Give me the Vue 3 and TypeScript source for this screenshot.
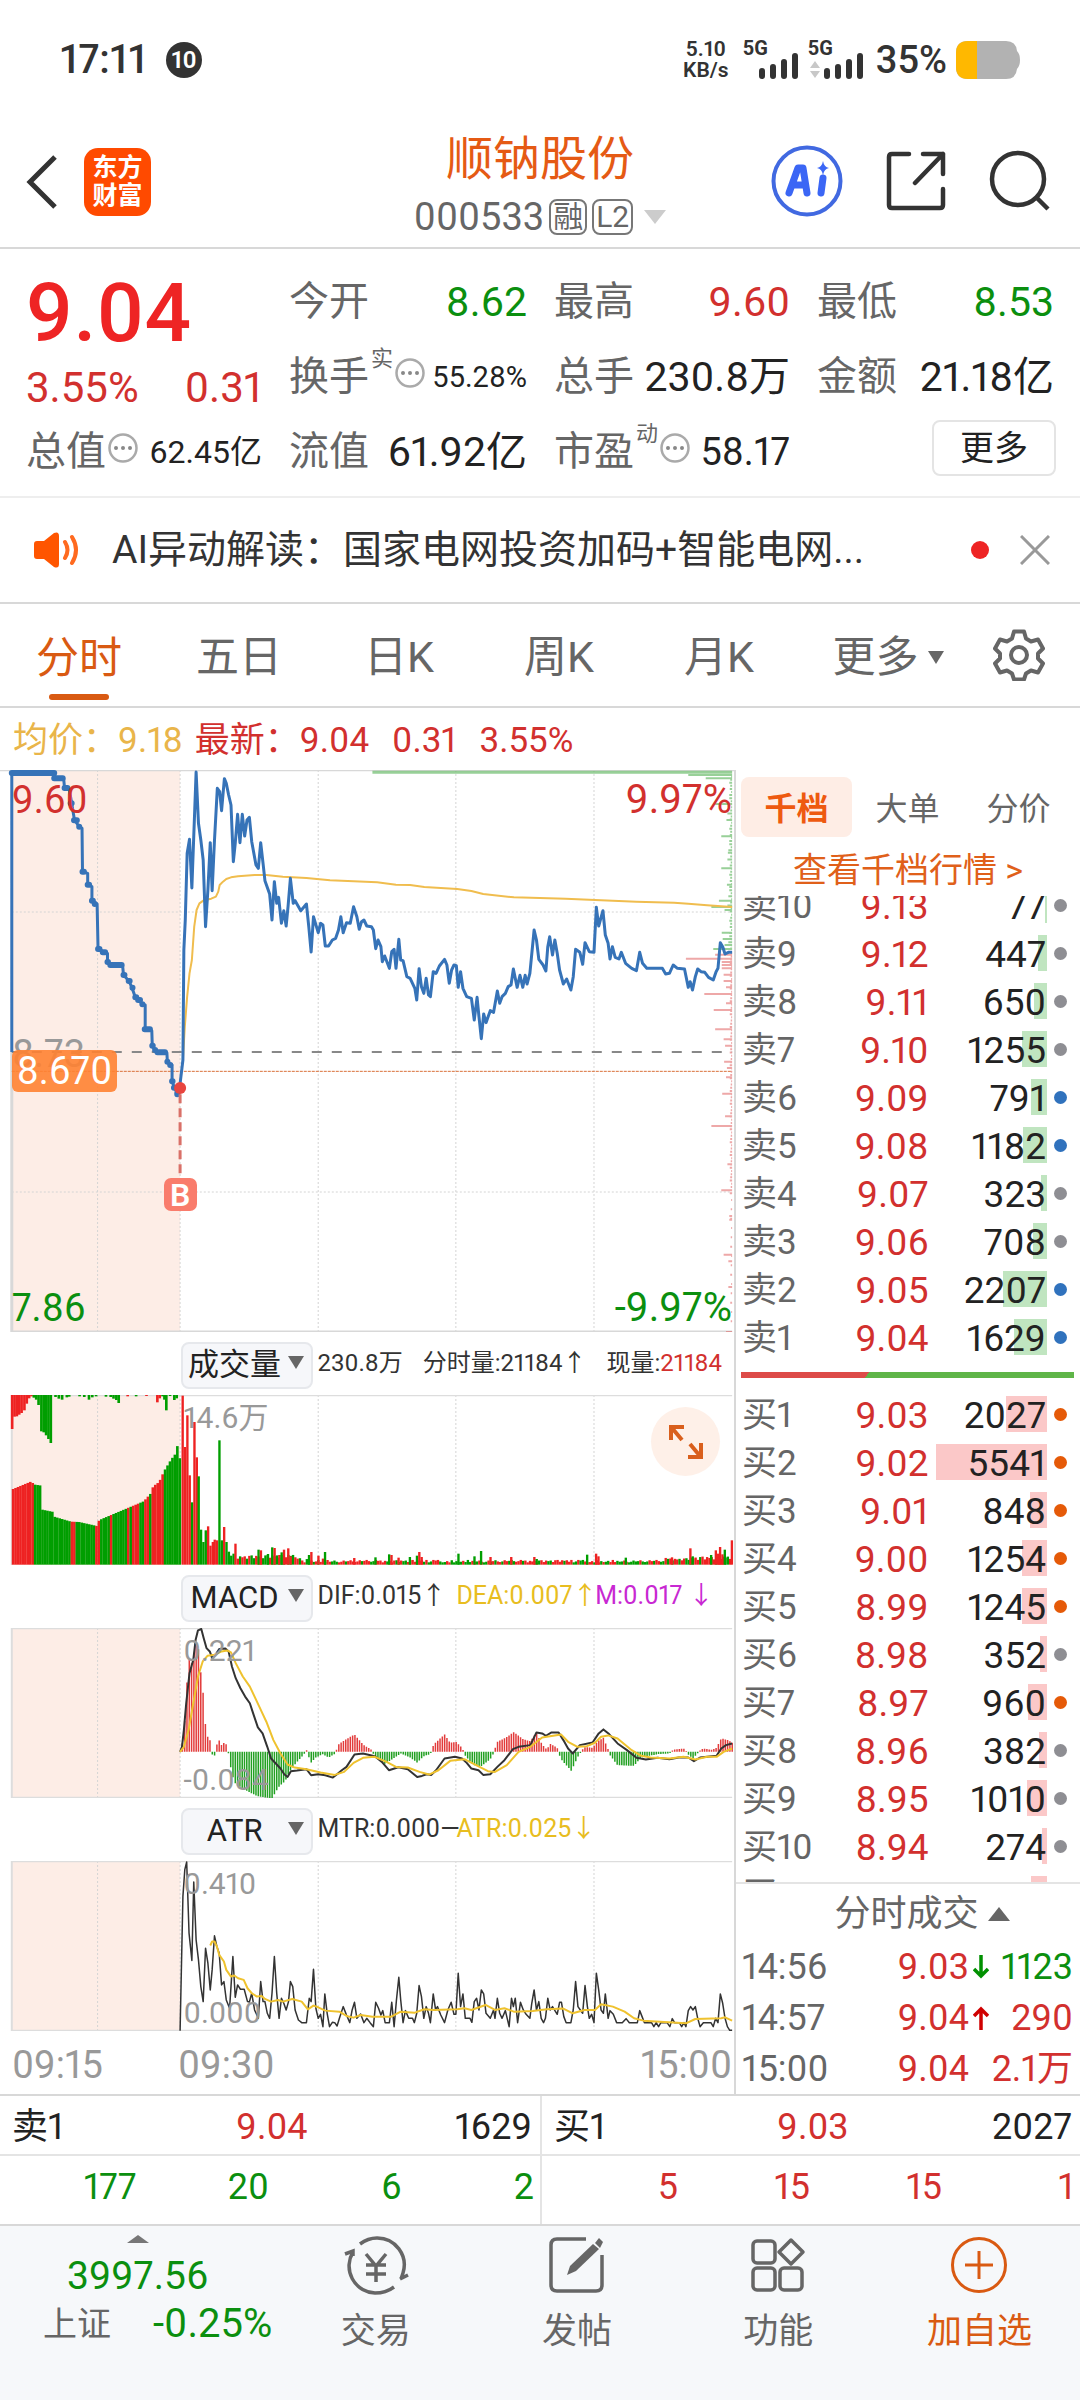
<script setup lang="ts">
interface Level { label: string; price: string; volume: number; tone: 'gray' | 'blue' | 'orange' }
interface Bar { x: number; y: number; h: number; w: number; red: boolean }

const asks: Level[] = [
  { label: '卖10', price: '9.13', volume: 77, tone: 'gray' },
  { label: '卖9', price: '9.12', volume: 447, tone: 'gray' },
  { label: '卖8', price: '9.11', volume: 650, tone: 'gray' },
  { label: '卖7', price: '9.10', volume: 1255, tone: 'gray' },
  { label: '卖6', price: '9.09', volume: 791, tone: 'blue' },
  { label: '卖5', price: '9.08', volume: 1182, tone: 'blue' },
  { label: '卖4', price: '9.07', volume: 323, tone: 'gray' },
  { label: '卖3', price: '9.06', volume: 708, tone: 'gray' },
  { label: '卖2', price: '9.05', volume: 2207, tone: 'blue' },
  { label: '卖1', price: '9.04', volume: 1629, tone: 'blue' },
]
const bids: Level[] = [
  { label: '买1', price: '9.03', volume: 2027, tone: 'orange' },
  { label: '买2', price: '9.02', volume: 5541, tone: 'orange' },
  { label: '买3', price: '9.01', volume: 848, tone: 'orange' },
  { label: '买4', price: '9.00', volume: 1254, tone: 'orange' },
  { label: '买5', price: '8.99', volume: 1245, tone: 'orange' },
  { label: '买6', price: '8.98', volume: 352, tone: 'gray' },
  { label: '买7', price: '8.97', volume: 960, tone: 'orange' },
  { label: '买8', price: '8.96', volume: 382, tone: 'gray' },
  { label: '买9', price: '8.95', volume: 1010, tone: 'gray' },
  { label: '买10', price: '8.94', volume: 274, tone: 'gray' },
  { label: '买11', price: '8.93', volume: 784, tone: 'gray' },
]
const depth = (volume: number) => ({ width: Math.max(1, Math.round(volume / 50)) + 'px' })

const trades = [
  { time: '14:56', price: '9.03', arrow: 'down', volume: '1123', cls: 'green' },
  { time: '14:57', price: '9.04', arrow: 'up', volume: '290', cls: 'red' },
  { time: '15:00', price: '9.04', arrow: '', volume: '2.1万', cls: 'red' },
]
const periods = ['分时', '五日', '日K', '周K', '月K']
const gridX = [207, 382, 675, 967, 1260]

const auction = '25,876 25,38 115,38 115,55 135,55 137,85 147,88 152,130 158,180 168,200 174,205 175,335 186,340 186,374 195,380 195,422 206,432 208,567 220,577 228,580 228,605 235,615 260,615 262,645 273,662 280,683 287,712 293,720 303,733 308,735 308,808 322,812 323,857 333,876 354,878 355,905 365,915 365,964 370,983 376,1000'
const auctionMarks = 'M25 39H115M115 55H133M137 84h6M150 130h2M157 181h6M168 200h.1M175 335h3M186 374h3M195 422h2M201 432h.1M208 567h3M218 577h5M228 606h1M234 615h24M262 645h2M273 663h2M281 683h.1M287 712h2M293 720h4M302 733h.1M307 808h11M323 857h1M329 870h.1M334 877h16M355 905h.1M361 915h.1M365 964h1M369 983h.1M376 1000v3'
const price = '376,1003 381,983 388,900 390,570 393,480 397,280 402,238 407,384 416,36 421,190 426,240 431,300 436,500 441,390 446,248 450,392 455,240 461,85 466,95 470,152 476,56 480,70 485,105 490,135 495,305 499,250 504,163 509,248 514,163 519,228 524,180 529,172 534,245 543,315 548,325 553,248 558,310 562,362 572,402 577,480 582,365 587,430 591,412 597,490 602,452 607,498 611,440 616,355 622,430 626,422 638,452 650,432 655,500 660,576 665,470 675,518 680,490 685,495 690,558 697,558 705,540 712,535 718,510 723,470 728,518 735,488 743,490 750,440 757,470 762,508 767,485 772,480 778,498 788,500 792,510 797,566 802,540 808,560 811,605 816,588 826,625 831,575 836,568 840,625 846,538 850,600 855,602 863,650 870,655 880,685 884,720 889,626 894,680 899,700 904,655 909,705 913,710 919,635 925,640 932,618 943,598 948,615 953,670 958,630 963,615 968,617 972,682 977,635 982,685 990,710 1000,715 1006,780 1012,712 1016,770 1021,836 1026,762 1031,788 1040,752 1047,757 1055,693 1060,730 1065,710 1072,700 1078,680 1084,675 1089,627 1097,682 1103,646 1109,682 1114,646 1118,672 1124,640 1133,510 1138,540 1143,598 1152,615 1158,633 1162,560 1166,530 1172,585 1177,540 1182,580 1187,630 1195,672 1202,657 1211,690 1216,650 1221,568 1230,577 1236,613 1241,548 1250,575 1260,577 1265,442 1270,498 1279,452 1284,525 1290,550 1294,597 1299,560 1305,592 1313,597 1318,577 1327,610 1340,625 1350,632 1357,577 1363,610 1372,625 1405,625 1412,642 1420,640 1428,615 1437,625 1452,627 1460,682 1464,665 1469,690 1475,650 1480,627 1487,635 1495,637 1503,652 1513,660 1519,635 1523,625 1528,548 1533,560 1538,582 1545,577 1553,577'
const average = '388,900 392,800 397,710 402,640 407,600 412,500 417,450 423,430 432,421 448,416 458,410 463,395 466,375 473,365 480,357 490,352 505,349 540,345 565,345 600,350 650,354 700,361 800,367 840,374 870,375 900,381 970,387 1000,393 1025,402 1090,412 1200,416 1350,425 1430,428 1460,431 1500,436 1553,441'

/* volume-by-price ticks along the right edge: [y, length] */
const profileGreen: number[][] = [[35, 763], [38, 763], [45, 93], [55, 56], [132, 37], [180, 12], [229, 23], [278, 9], [325, 23], [374, 11], [422, 28], [441, 44], [450, 16], [518, 22], [537, 20], [555, 16], [567, 40]]
const profileRed: number[][] = [[584, 36], [596, 98], [606, 22], [615, 22], [625, 22], [644, 18], [663, 18], [682, 13], [702, 59], [730, 13], [750, 39], [808, 36], [838, 18], [857, 15], [905, 17], [924, 11], [952, 13], [1001, 21], [1069, 15], [1098, 44], [1213, 10], [1291, 23], [1368, 6], [1379, 6], [1484, 18], [1504, 8], [1581, 8], [1716, 13]]
for (let i = 0; i < 57; i++) profileGreen.push([50 + i * 9.2, 2 + ((i * 7) % 5) * (i % 3 === 0 ? 2 : 1)])
for (let i = 0; i < 76; i++) profileRed.push([580 + i * 9.6, 2 + ((i * 5) % 4) * (i % 4 === 0 && i < 45 ? 3 : 1)])
for (let i = 0; i < 14; i++) profileRed.push([1320 + i * 28, 2 + (i % 3)])
const ticks = (list: number[][]) => list.map(([y, len]) => `M1553 ${y}h${-len}`).join('')

function interpolate(points: number[][], x: number): number {
  for (let i = 1; i < points.length; i++) {
    const [x0, y0] = points[i - 1]
    const [x1, y1] = points[i]
    if (x <= x1) return y0 + ((y1 - y0) * (x - x0)) / (x1 - x0 || 1)
  }
  return points[points.length - 1][1]
}

/* call-auction volume: matched quantity rises from below, unmatched hangs from the top */
const matched = [[25, 508], [66, 484], [67, 494], [86, 498], [87, 570], [111, 577], [112, 591], [148, 606], [165, 607], [203, 619], [204, 606], [213, 598], [302, 545], [318, 520], [322, 500], [335, 487], [345, 455], [360, 420], [372, 398], [375, 358], [378, 358], [380, 550], [384, 550]]
const redRuns = [[25, 70], [148, 161], [203, 209], [231, 236], [267, 273], [281, 287], [289, 293], [303, 315], [320, 345]]
const unmatched: number[][] = [[25, 328, 1], [30, 291, 1], [35, 290, 1], [40, 285, 1], [45, 280, 1], [51, 272, 1], [56, 252, 1], [61, 236, 1], [66, 230, 1], [71, 234, 0], [76, 240, 0], [81, 256, 0], [87, 335, 0], [92, 338, 0], [97, 347, 0], [102, 358, 0], [107, 370, 0], [117, 232, 0], [124, 237, 0], [131, 240, 0], [141, 233, 0], [146, 231, 0], [168, 230, 0], [178, 232, 0], [188, 240, 0], [195, 233, 0], [203, 230, 0], [224, 231, 0], [234, 232, 0], [240, 237, 0], [246, 241, 0], [251, 250, 0], [270, 230, 1], [288, 230, 0], [310, 229, 1], [333, 248, 1], [338, 236, 1], [344, 230, 0], [348, 240, 0], [352, 272, 0], [360, 229, 0], [369, 241, 0], [374, 236, 0]]
const volumeBars: Bar[] = []
for (let x = 25; x < 383; x += 5.2) {
  const y = interpolate(matched, x)
  volumeBars.push({ x, y, h: 735 - y, w: 5.6, red: redRuns.some(([a, b]) => x >= a - 2 && x < b - 2) })
}
for (const [x, y, red] of unmatched) volumeBars.push({ x: x - 2, y: 226, h: y - 226, w: 5.6, red: red === 1 })
const opening: number[][] = [[387, 228, 1], [392, 382, 1], [397, 287, 1], [402, 467, 1], [407, 548, 0], [412, 307, 1], [417, 413, 1], [421, 470, 0], [426, 630, 0], [431, 667, 0], [436, 632, 0], [441, 620, 1], [446, 678, 1], [451, 667, 1], [455, 660, 1], [460, 662, 1], [465, 362, 0], [470, 662, 0], [475, 622, 1], [480, 667, 0], [485, 696, 0], [490, 708, 0], [495, 702, 0], [499, 672, 1]]
const peaks: number[][] = [[548, 690, 0], [553, 692, 1], [568, 703, 0], [577, 683, 0], [582, 685, 1], [592, 706, 1], [597, 698, 0], [602, 690, 1], [611, 686, 1], [616, 710, 1], [655, 706, 0], [660, 697, 1], [675, 708, 1], [689, 697, 0], [751, 715, 1], [796, 713, 0], [825, 704, 0], [830, 706, 1], [845, 714, 1], [869, 712, 0], [884, 708, 0], [889, 697, 1], [894, 712, 1], [972, 702, 0], [1006, 710, 0], [1020, 694, 0], [1040, 712, 1], [1084, 712, 1], [1133, 712, 1], [1138, 718, 0], [1245, 705, 0], [1264, 702, 1], [1269, 710, 1], [1327, 714, 0], [1425, 713, 1], [1464, 686, 1], [1469, 710, 0], [1508, 706, 0], [1518, 692, 1], [1523, 702, 1], [1527, 682, 1], [1532, 704, 1], [1537, 690, 0], [1552, 662, 1]]
for (const [x, y, red] of opening) volumeBars.push({ x: x - 2, y, h: 735 - y, w: 5, red: red === 1 })
for (let i = 0; i < 215; i++) {
  const x = 504 + i * 4.88
  const base = i < 28 ? 18 : i > 185 ? 13 : 7
  const h = base + ((i * 13 + ((i * i) % 7)) % 9) * (i < 40 || i > 195 ? 1.4 : 0.9)
  volumeBars.push({ x: x - 2, y: 735 - h, h, w: 5, red: (i * 5 + ((i * i) % 11)) % 7 < 4 })
}
for (const [x, y, red] of peaks) volumeBars.push({ x: x - 2, y, h: 735 - y, w: 5, red: red === 1 })

const histogram = [[382, 0], [388, 30], [393, 110], [397, 215], [402, 280], [407, 260], [412, 300], [417, 317], [421, 305], [426, 235], [431, 172], [436, 75], [441, 40], [446, 32], [451, -12], [455, -10], [460, 20], [465, 32], [470, 18], [475, 25], [480, 20], [485, -5], [490, -50], [495, -78], [500, -95], [520, -112], [545, -130], [577, -138], [590, -105], [605, -85], [615, -55], [630, -28], [645, -5], [650, 4], [660, -30], [670, -15], [685, -5], [697, -15], [712, -3], [718, 20], [730, 32], [752, 50], [770, 20], [788, 4], [795, -10], [815, -35], [830, -22], [850, -3], [870, -15], [885, -30], [900, -10], [913, -5], [920, 20], [943, 50], [955, 25], [967, 28], [980, 10], [988, -12], [1005, -38], [1020, -42], [1040, -20], [1048, 0], [1055, 28], [1075, 42], [1090, 57], [1110, 35], [1125, 30], [1138, 55], [1150, 20], [1160, 5], [1167, 22], [1182, 10], [1190, -20], [1212, -55], [1225, -15], [1232, 0], [1240, 12], [1257, 10], [1268, 30], [1280, 40], [1290, 5], [1295, -10], [1310, -38], [1345, -40], [1360, -15], [1395, -5], [1420, -3], [1430, 5], [1450, 8], [1460, -6], [1470, -18], [1480, -2], [1492, 8], [1510, 4], [1520, 10], [1530, 38], [1545, 33], [1553, 25]]
let histUp = ''
let histDown = ''
for (let i = 1; i <= 240; i++) {
  const x = 382 + i * 4.88
  const v = interpolate(histogram, x)
  if (v >= 0) histUp += `M${x.toFixed(1)} 545v${(-v - 2).toFixed(1)}`
  else histDown += `M${x.toFixed(1)} 545v${(-v + 2).toFixed(1)}`
}
const dif = '382,545 386,530 390,480 395,400 402,310 410,270 415,210 420,182 427,178 432,205 438,235 445,245 450,265 457,255 465,238 478,236 485,245 492,290 500,325 510,355 520,380 530,400 537,430 547,472 557,490 567,530 575,565 585,580 595,595 603,612 610,620 617,603 630,601 650,597 660,615 675,612 690,615 706,622 715,612 725,600 735,590 752,553 770,550 795,558 810,575 825,600 845,591 865,597 885,620 895,617 905,612 915,614 925,600 943,565 965,560 980,565 990,578 1000,595 1015,600 1025,614 1040,612 1055,590 1070,570 1088,537 1100,530 1125,525 1138,487 1150,490 1158,497 1170,487 1185,487 1195,510 1205,535 1215,550 1230,525 1257,517 1270,490 1280,478 1292,492 1310,520 1330,540 1350,563 1370,568 1395,563 1420,567 1440,562 1460,562 1472,573 1485,562 1520,557 1530,535 1540,525 1553,520'
const dea = '382,545 390,530 400,480 410,400 420,320 430,275 440,258 455,255 470,245 482,242 490,248 500,280 515,320 530,350 550,410 565,455 580,510 595,550 610,583 625,592 650,597 680,607 710,614 730,605 750,578 770,563 795,560 820,575 840,590 865,592 890,605 910,613 930,600 955,572 985,567 1010,585 1035,603 1050,605 1075,585 1100,545 1125,530 1150,502 1190,493 1205,515 1225,530 1245,528 1262,518 1275,500 1290,496 1310,505 1340,540 1360,557 1380,562 1420,565 1450,560 1475,568 1500,560 1520,560 1535,545 1553,535'
const mtr = '382,692 388,290 392,210 396,187 401,400 407,482 411,247 416,420 421,480 426,560 431,605 436,445 441,490 446,570 450,510 455,408 460,440 465,460 470,555 475,545 480,600 487,625 490,560 494,470 499,592 504,555 510,568 518,568 525,605 529,606 534,580 540,630 548,655 553,545 558,605 562,605 567,640 572,655 577,580 582,470 587,580 592,655 597,595 602,610 607,630 612,605 616,545 621,560 626,630 633,660 640,668 650,668 656,595 660,605 665,508 670,625 675,655 680,643 685,680 689,582 694,640 699,680 705,667 710,668 715,678 720,655 728,620 735,645 742,668 747,630 752,607 757,655 765,642 772,668 778,655 785,668 792,680 797,607 803,625 808,645 812,632 817,668 826,668 831,607 836,680 841,600 846,532 850,600 855,668 860,632 867,655 875,655 879,668 884,640 889,557 894,590 899,655 904,620 909,640 913,668 919,582 924,630 928,620 935,645 943,668 950,630 957,607 963,643 967,643 972,520 977,620 982,582 987,655 997,655 1001,667 1006,605 1011,595 1016,630 1021,570 1026,582 1031,640 1040,655 1047,630 1050,655 1055,595 1060,640 1065,655 1072,632 1080,680 1085,595 1089,620 1093,595 1098,668 1104,607 1110,630 1116,643 1124,655 1128,610 1133,570 1138,630 1143,605 1148,655 1153,668 1157,655 1162,595 1167,630 1172,620 1182,643 1187,607 1191,607 1196,650 1201,668 1211,668 1216,630 1221,545 1226,620 1231,630 1236,640 1241,557 1246,620 1250,655 1255,643 1260,668 1265,520 1270,570 1275,630 1280,640 1284,582 1290,655 1294,632 1301,643 1308,668 1320,668 1328,656 1335,668 1352,668 1357,632 1362,650 1367,668 1382,668 1387,680 1392,668 1397,680 1402,668 1415,668 1421,680 1426,656 1431,668 1441,668 1446,680 1451,668 1455,680 1460,632 1465,620 1470,630 1475,620 1480,655 1485,680 1492,668 1508,668 1513,680 1518,655 1523,668 1528,582 1533,610 1538,655 1543,680 1548,691 1553,691'
const atr = '446,437 450,425 455,425 460,440 465,465 475,485 480,510 490,530 497,527 505,535 517,540 525,565 534,580 545,590 555,588 562,597 575,605 590,600 600,605 620,597 640,605 653,628 665,617 675,622 690,632 720,635 735,648 750,653 765,645 790,650 830,650 850,635 880,638 900,628 920,630 970,628 985,625 1000,630 1030,615 1050,630 1070,625 1090,635 1130,633 1160,628 1195,626 1215,640 1240,630 1262,630 1275,613 1300,620 1325,635 1345,655 1365,662 1400,665 1455,670 1475,657 1530,655 1538,652 1553,662'
</script>

<template>
  <div class="app">
    <div class="status">
      <span class="clock">17:11</span>
      <span class="count">10</span>
      <span class="grow"></span>
      <span class="speed">5.10<br>KB/s</span>
      <span class="signal">
        <small>5G</small>
        <svg width="40" height="26" viewBox="0 0 40 26" stroke="#333" stroke-width="6" stroke-linecap="round"><path d="M3 18v5M14 14v9M25 9v14M36 3v20" /></svg>
      </span>
      <span class="signal">
        <small>5G</small>
        <svg width="54" height="26" viewBox="0 0 54 26"><path d="M0 15l5-7 5 7zM0 18l5 7 5-7z" fill="#c8c8c8" /><path d="M17 18v5M28 14v9M39 9v14M50 3v20" stroke="#333" stroke-width="6" stroke-linecap="round" /></svg>
      </span>
      <span class="percent">35%</span>
      <svg class="battery" width="64" height="38" viewBox="0 0 64 38"><path d="M12 0H50Q60 0 61 10Q64 13 64 19T61 28Q60 38 50 38H12Q0 38 0 26V12Q0 0 12 0Z" fill="#b2b2b2" /><path d="M21 0H12Q0 0 0 12V26Q0 38 12 38H21Z" fill="#ffb800" /></svg>
    </div>

    <header class="header">
      <div class="side">
        <button class="icon" aria-label="返回"><svg width="34" height="56" viewBox="0 0 34 56" fill="none" stroke="#333" stroke-width="5"><path d="M30 3L5 28l25 25" /></svg></button>
        <span class="logo">东方<br>财富</span>
      </div>
      <div class="name">
        <h1>顺钠股份</h1>
        <div class="code">
          <span>000533</span><span class="tag">融</span><span class="tag">L2</span>
          <svg width="22" height="14" viewBox="0 0 22 14"><path d="M0 0h22L11 14z" fill="#ccc" /></svg>
        </div>
      </div>
      <div class="side tools">
        <button class="icon" aria-label="AI">
          <svg width="72" height="72" viewBox="0 0 72 72"><circle cx="36" cy="36" r="33.500" fill="none" stroke="#4169e1" stroke-width="4" /><path d="M18 48L27 23h5l4 25M22 40h12M52 33l-2 15" fill="none" stroke="#3b66f5" stroke-width="7" stroke-linecap="round" stroke-linejoin="round" /><path d="M52 16q1 6 6 7q-5 1-6 7q-1-6-6-7q5-1 6-7z" fill="#3b66f5" /></svg>
        </button>
        <button class="icon" aria-label="分享">
          <svg width="60" height="60" viewBox="0 0 60 60" fill="none" stroke="#333" stroke-width="4.500" stroke-linecap="round" stroke-linejoin="round"><path d="M23 3H6Q3 3 3 6V54Q3 57 6 57H54Q57 57 57 54V38M37 3H57V23M57 3L29 32" /></svg>
        </button>
        <button class="icon" aria-label="搜索">
          <svg width="62" height="62" viewBox="0 0 62 62" fill="none" stroke="#333" stroke-width="4.500"><circle cx="29" cy="29" r="26" /><path d="M47 47l12 12" /></svg>
        </button>
      </div>
    </header>

    <section class="quote">
      <div class="last">9.04</div>
      <div class="change"><span>3.55%</span><span>0.31</span></div>
      <dl class="c2 r1"><dt>今开</dt><dd class="green">8.62</dd></dl>
      <dl class="c3 r1"><dt>最高</dt><dd class="red">9.60</dd></dl>
      <dl class="c4 r1"><dt>最低</dt><dd class="green">8.53</dd></dl>
      <dl class="c2 r2"><dt>换手<sup>实</sup><svg class="hint" viewBox="0 0 30 30"><circle cx="15" cy="15" r="13.500" /><path d="M8 15h0M15 15h0M22 15h0" /></svg></dt><dd class="s">55.28%</dd></dl>
      <dl class="c3 r2"><dt>总手</dt><dd>230.8万</dd></dl>
      <dl class="c4 r2"><dt>金额</dt><dd>21.18亿</dd></dl>
      <dl class="c1 r3"><dt>总值<svg class="hint" viewBox="0 0 30 30"><circle cx="15" cy="15" r="13.500" /><path d="M8 15h0M15 15h0M22 15h0" /></svg></dt><dd class="m">62.45亿</dd></dl>
      <dl class="c2 r3"><dt>流值</dt><dd>61.92亿</dd></dl>
      <dl class="c3 r3"><dt>市盈<sup>动</sup><svg class="hint" viewBox="0 0 30 30"><circle cx="15" cy="15" r="13.500" /><path d="M8 15h0M15 15h0M22 15h0" /></svg></dt><dd class="l">58.17</dd></dl>
      <button class="more">更多</button>
    </section>

    <section class="news">
      <svg width="46" height="36" viewBox="0 0 46 36"><path d="M3 9h7L20 1Q25-1 25 4V32Q25 37 20 35L10 27H3Q0 27 0 24V12Q0 9 3 9z" fill="#ff5500" /><path d="M31 10q5 8 0 16M38 5q8 13 0 26" fill="none" stroke="#ff6a1f" stroke-width="4" stroke-linecap="round" /></svg>
      <a href="#">AI异动解读：国家电网投资加码+智能电网...</a>
      <i class="dot-red"></i>
      <button class="icon" aria-label="关闭"><svg width="30" height="30" viewBox="0 0 30 30" stroke="#999" stroke-width="3"><path d="M1 1l28 28M29 1L1 29" /></svg></button>
    </section>

    <nav class="periods">
      <button v-for="(p, i) in periods" :key="p" :class="{ active: i === 0 }">{{ p }}</button>
      <button>更多<svg width="16" height="13" viewBox="0 0 16 13"><path d="M0 0h16L8 13z" fill="#666" /></svg></button>
      <button aria-label="设置">
        <svg width="52" height="52" viewBox="0 0 52 52" fill="none" stroke="#666" stroke-width="4" stroke-linejoin="round"><path d="M21 2.500h10l2 7 5 3 7-2 5 9-5 5v5l5 5-5 9-7-2-5 3-2 6H21l-2-6-5-3-7 2-5-9 5-5v-5l-5-5 5-9 7 2 5-3z" /><circle cx="26" cy="26" r="8" /></svg>
      </button>
    </nav>

    <div class="summary"><span class="gold">均价：9.18</span><span class="red">最新：9.04</span><span class="red">0.31</span><span class="red">3.55%</span></div>

    <main class="main">
      <section class="charts">
        <div class="plot price-plot">
          <svg viewBox="0 30 1557 1686" preserveAspectRatio="none">
            <rect x="25" y="30" width="357" height="1686" fill="#fdede6" />
            <path class="grid" d="M25 456H1553M25 1296H1553" /><path v-for="x in gridX" :key="x" class="grid" :d="`M${x} 30V1716`" />
            <path d="M0 31H1557" stroke="#d8d8d8" stroke-width="2" /><path d="M25 876V1716H1553" fill="none" stroke="#d8d8d8" stroke-width="3" />
            <path d="M25 876H1553" stroke="#888" stroke-width="2" stroke-dasharray="10 10" />
            <path d="M25 934H1553" stroke="#d9703a" stroke-width="1" stroke-dasharray="3 1" />
            <path :d="ticks(profileGreen)" stroke="#54b054" stroke-opacity=".6" stroke-width="2" />
            <path :d="ticks(profileRed)" stroke="#e06060" stroke-opacity=".55" stroke-width="2" />
            <polyline :points="average" stroke="#f0bd4e" stroke-width="2" />
            <polyline :points="auction" stroke="#3673b8" stroke-width="3" />
            <path :d="auctionMarks" stroke="#3673b8" stroke-width="6" stroke-linecap="round" fill="none" />
            <polyline :points="price" stroke="#3673b8" stroke-width="3" />
            <path d="M382 1003V1255" stroke="#d97068" stroke-width="3" stroke-dasharray="9 5" />
            <path d="M382 984h.1" stroke="#e8453f" stroke-width="12" stroke-linecap="round" />
          </svg>
          <span class="mark tl red">9.60</span><span class="mark tr red">9.97%</span>
          <span class="mark mid">8.73</span><span class="cost">8.670</span><span class="buy">B</span>
          <span class="mark bl green">7.86</span><span class="mark br green">-9.97%</span>
        </div>

        <div class="indicator">
          <label class="pick"><select aria-label="指标一"><option>成交量</option></select><svg width="16" height="13" viewBox="0 0 16 13"><path d="M0 0h16L8 13z" /></svg></label>
          <div class="values vol"><span>230.8万</span><span>分时量:21184↑</span><span>现量:<b class="red">21184</b></span></div>
        </div>
        <div class="plot">
          <svg viewBox="0 226 1557 510" preserveAspectRatio="none">
            <rect x="25" y="226" width="357" height="510" fill="#fdede6" />
            <path v-for="x in gridX" :key="x" class="grid" :d="`M${x} 226V736`" /><path d="M25 227H1553" stroke="#ddd" stroke-width="2" /><path d="M25 226V736" stroke="#ddd" stroke-width="2" />
            <rect v-for="(b, i) in volumeBars" :key="i" :x="b.x" :y="b.y" :width="b.w" :height="b.h" :fill="b.red ? '#ee2222' : '#009e00'" />
          </svg>
          <span class="scale top">14.6万</span>
          <button class="expand" aria-label="全屏"><svg width="36" height="48" viewBox="0 0 36 48" fill="none" stroke="#d95f1c" stroke-width="4"><path d="M3 22V9H16M4 10l10 12M20 39H33V25M32 38L22 26" /></svg></button>
        </div>

        <div class="indicator">
          <label class="pick"><select aria-label="指标二"><option>MACD</option></select><svg width="16" height="13" viewBox="0 0 16 13"><path d="M0 0h16L8 13z" /></svg></label>
          <div class="values"><span>DIF:0.015↑</span><span class="yellow">DEA:0.007↑</span><span class="purple">M:0.017 ↓</span></div>
        </div>
        <div class="plot">
          <svg viewBox="0 175 1557 508" preserveAspectRatio="none">
            <rect x="25" y="175" width="357" height="508" fill="#fdede6" />
            <path v-for="x in gridX" :key="x" class="grid" :d="`M${x} 175V683`" /><path d="M1553 176H25V682H1553" fill="none" stroke="#ddd" stroke-width="2" />
            <path :d="histUp" stroke="#e23b3b" stroke-width="1.500" /><path :d="histDown" stroke="#22a022" stroke-width="1.500" />
            <polyline :points="dif" stroke="#333" stroke-width="2" /><polyline :points="dea" stroke="#efc22e" stroke-width="2" />
          </svg>
          <span class="scale top">0.221</span><span class="scale bottom">-0.084</span>
        </div>

        <div class="indicator">
          <label class="pick"><select aria-label="指标三"><option>ATR</option></select><svg width="16" height="13" viewBox="0 0 16 13"><path d="M0 0h16L8 13z" /></svg></label>
          <div class="values"><span>MTR:0.000—</span><span class="yellow">ATR:0.025↓</span></div>
        </div>
        <div class="plot">
          <svg viewBox="0 184 1557 509" preserveAspectRatio="none">
            <rect x="25" y="184" width="357" height="509" fill="#fdede6" />
            <path v-for="x in gridX" :key="x" class="grid" :d="`M${x} 184V693`" /><path d="M1553 185H25V692H1553" fill="none" stroke="#ddd" stroke-width="2" />
            <polyline :points="mtr" stroke="#333" stroke-width="1.500" /><polyline :points="atr" stroke="#efc22e" stroke-width="2" />
          </svg>
          <span class="scale top">0.410</span><span class="scale bottom">0.000</span>
        </div>
        <div class="axis"><span>09:15</span><span>09:30</span><span>15:00</span></div>
      </section>

      <aside class="book">
        <div class="book-tabs"><button class="active">千档</button><button>大单</button><button>分价</button></div>
        <a class="book-link" href="#">查看千档行情 &gt;</a>
        <div class="asks">
          <table class="levels sell">
            <tr v-for="l in asks" :key="l.label"><th>{{ l.label }}</th><td>{{ l.price }}</td><td class="qty"><i :style="depth(l.volume)"></i><span>{{ l.volume }}</span></td><td class="state"><i :class="l.tone"></i></td></tr>
          </table>
        </div>
        <div class="ratio"></div>
        <div class="bids">
          <table class="levels purchase">
            <tr v-for="l in bids" :key="l.label"><th>{{ l.label }}</th><td>{{ l.price }}</td><td class="qty"><i :style="depth(l.volume)"></i><span>{{ l.volume }}</span></td><td class="state"><i :class="l.tone"></i></td></tr>
          </table>
        </div>
        <div class="trades">
          <button>分时成交<svg width="22" height="14" viewBox="0 0 22 14"><path d="M0 14h22L11 0z" fill="#666" /></svg></button>
          <table>
            <tr v-for="t in trades" :key="t.time">
              <th>{{ t.time }}</th><td class="red">{{ t.price }}</td>
              <td class="arrow"><svg v-if="t.arrow" width="16" height="24" viewBox="0 0 16 24" fill="none" stroke-width="3.500" :stroke="t.arrow === 'up' ? '#d00000' : '#009000'"><path :d="t.arrow === 'up' ? 'M8 24V3M1 10l7-7 7 7' : 'M8 0v21M1 14l7 7 7-7'" /></svg></td>
              <td :class="t.cls">{{ t.volume }}</td>
            </tr>
          </table>
        </div>
      </aside>
    </main>

    <section class="queues">
      <div class="best"><span>卖1</span><span class="red">9.04</span><span>1629</span></div>
      <div class="best"><span>买1</span><span class="red">9.03</span><span>2027</span></div>
      <div class="orders green"><span>177</span><span>20</span><span>6</span><span>2</span></div>
      <div class="orders red"><span>5</span><span>15</span><span>15</span><span>1</span></div>
    </section>

    <footer class="tabbar">
      <button class="index">
        <svg width="22" height="8" viewBox="0 0 22 8"><path d="M0 8h22L11 0z" fill="#777" /></svg>
        <span class="points green">3997.56</span>
        <span class="pair"><span>上证</span><span class="green">-0.25%</span></span>
      </button>
      <button>
        <svg width="68" height="60" viewBox="0 0 68 60" fill="none" stroke="#666" stroke-width="3.500"><path d="M18 9Q26 3 35 3a27 27 0 0 1 26 35l-2 6M3 19l8-3v5M66 40l-8 4M11 17A27 27 0 0 0 33 58Q44 58 52 52M24 19l10 12L44 19M34 31v16M24 30h20M24 39h20" /></svg>交易
      </button>
      <button>
        <svg width="56" height="60" viewBox="0 0 56 60" fill="none" stroke="#666" stroke-width="3.500"><path d="M37 4H8Q2 4 2 10V50Q2 56 8 56H47Q53 56 53 50V20" /><path d="M44 9l6 5L27 36l-9 4 3-9z" fill="#666" stroke="none" /><path d="M46 8l4-5 4 4-3 6z" fill="#666" stroke="none" /></svg>发帖
      </button>
      <button>
        <svg width="56" height="60" viewBox="0 0 56 60" fill="none" stroke="#666" stroke-width="3.500" stroke-linejoin="round"><rect x="3" y="6" width="22" height="22" rx="4" /><rect x="3" y="33" width="22" height="22" rx="4" /><rect x="30" y="33" width="22" height="22" rx="4" /><path d="M41 5l12 12-12 12-12-12z" /></svg>功能
      </button>
      <button class="add">
        <svg width="60" height="60" viewBox="0 0 60 60" fill="none" stroke="#d95a12" stroke-width="3"><circle cx="30" cy="30" r="26.500" /><path d="M30 16v28M16 30h28" /></svg>加自选
      </button>
    </footer>
  </div>
</template>

<style>
body { background: #fff; }
</style>

<style scoped>
.app { font-family: Roboto, "Noto Sans CJK SC", sans-serif; font-size: 36px; line-height: 48px; color: #222; background: #fff; font-variant-numeric: proportional-nums; }
.app * { box-sizing: border-box; }
button { border: 0; padding: 0; background: none; font: inherit; color: inherit; }
a { color: inherit; text-decoration: none; }
svg { display: block; flex: none; }
i, b { font-style: normal; font-weight: inherit; }
.red { color: #d2302e; }
.green { color: #0b8f0f; }
.gold { color: #e9b54a; }
.yellow { color: #e8bd20; }
.purple { color: #c828d2; }

.status { display: flex; align-items: center; height: 120px; padding: 0 60px; color: #333; }
.clock { font-size: 40px; font-weight: 500; width: 92px; }
.count { width: 36px; height: 36px; margin-left: 14px; border-radius: 50%; background: #333; color: #fff; font-size: 24px; font-weight: 600; line-height: 36px; text-align: center; }
.grow { flex: 1; }
.speed { font-size: 21px; font-weight: 600; line-height: 21px; width: 46px; text-align: center; }
.signal { display: flex; flex-direction: column; align-items: flex-end; width: 56px; height: 38px; margin-left: 9px; }
.signal small { align-self: flex-start; height: 12px; font-size: 20px; font-weight: 700; line-height: 14px; }
.speed + .signal { margin-left: 14px; }
.percent { margin: 0 9px 0 12px; font-size: 38px; font-weight: 500; }

.header { display: grid; grid-template-columns: 1fr auto 1fr; height: 129px; border-bottom: 2px solid #d8d8d8; }
.side { display: flex; align-items: flex-start; padding: 34px 0 0 25px; }
.logo { width: 67px; height: 68px; margin: -6px 0 0 25px; padding-top: 6px; border-radius: 14px; background: #ff4a00; color: #fff; font-size: 25px; font-weight: 700; line-height: 28px; text-align: center; }
.name { display: flex; flex-direction: column; align-items: center; padding-top: 11px; }
h1 { margin: 0; font-size: 47px; font-weight: 400; line-height: 56px; color: #e55a14; }
.code { display: flex; align-items: center; gap: 5px; height: 60px; font-size: 38px; color: #666; }
.tag { height: 36px; padding: 0 2px; border: 2px solid #777; border-radius: 8px; font-size: 30px; line-height: 32px; }
.code svg { margin-left: 6px; }
.tools { justify-content: flex-end; align-items: center; gap: 43px; padding: 0 29px 6px 0; }

.quote { display: grid; grid-template-columns: 236fr 238fr 236fr 237fr; column-gap: 27px; grid-template-rows: 75px 75px 75px; height: 249px; padding: 15px 26px 0; border-bottom: 2px solid #eee; }
.last { grid-area: 1 / 1; font-size: 82px; font-weight: 500; line-height: 98px; color: #ee2424; }
.change { grid-area: 2 / 1; display: flex; justify-content: space-between; padding-top: 25px; font-size: 42px; color: #d2302e; }
dl { display: flex; align-items: center; justify-content: space-between; margin: 0; }
dt { display: flex; align-items: center; font-size: 40px; color: #666; }
dd { margin: 0; font-size: 41px; color: #222; white-space: nowrap; }
dd.green { color: #0b8f0f; }
dd.red { color: #d2302e; }
dd.s { font-size: 29px; }
dd.m { font-size: 32px; }
dd.l { font-size: 38px; }
sup { align-self: flex-start; margin-left: 2px; font-size: 22px; line-height: 12px; }
.hint { width: 30px; height: 30px; margin: -8px 0 0 2px; fill: none; stroke: #aaa; stroke-width: 2.500; stroke-linecap: round; }
.hint path { stroke: #888; stroke-width: 4; }
.c1 { grid-column: 1; } .c2 { grid-column: 2; } .c3 { grid-column: 3; } .c4 { grid-column: 4; }
.r1 { grid-row: 1; } .r2 { grid-row: 2; } .r3 { grid-row: 3; }
.more { grid-area: 3 / 4; justify-self: end; align-self: center; width: 124px; height: 56px; margin: 0 -2px 8px 0; border: 2px solid #e4e4e4; border-radius: 8px; font-size: 34px; line-height: 48px; }

.news { display: flex; align-items: center; height: 106px; padding: 0 30px 0 34px; border-bottom: 2px solid #d8d8d8; font-size: 39px; color: #333; }
.news a { flex: 1; margin-left: 32px; white-space: nowrap; }
.dot-red { width: 18px; height: 18px; margin-right: 31px; border-radius: 50%; background: #ee2424; }

.periods { display: grid; grid-template-columns: repeat(6, 160fr) 120fr; height: 104px; border-bottom: 2px solid #d8d8d8; }
.periods button { display: flex; flex-direction: column; align-items: center; justify-content: center; padding: 4px 2px 0 0; font-size: 43px; color: #666; }
.periods button:nth-child(6) { flex-direction: row; padding-left: 18px; gap: 9px; }
.periods button:last-child { padding: 0 2px 0 0; }
.periods button.active { color: #d95a12; padding-top: 24px; }
.periods .active::after { content: ""; width: 60px; height: 6px; margin-top: 12px; border-radius: 3px; background: #d95a12; }

.summary { display: flex; align-items: center; height: 62px; padding: 4px 13px 0; font-size: 35px; }
.summary span { margin-right: 23px; }
.summary .gold { margin-right: 12px; }

.main { display: grid; grid-template-columns: 734fr 346fr; border-bottom: 2px solid #d8d8d8; }
.plot { position: relative; height: 170px; }
.price-plot { height: 562px; }
.plot > svg { width: 100%; height: 100%; }
.plot > svg * { vector-effect: non-scaling-stroke; }
.plot polyline { fill: none; stroke-linejoin: round; }
.grid { stroke: #d4d4d4; stroke-width: 1; stroke-dasharray: 2 2; }
.mark { position: absolute; font-size: 38px; line-height: 44px; }
.tl { top: 8px; left: 12px; }
.tr { top: 8px; right: 2px; font-size: 40px; }
.mid { top: 262px; left: 12px; color: #999; }
.bl { bottom: 2px; left: 12px; }
.br { bottom: 2px; right: 2px; font-size: 40px; }
.cost { position: absolute; top: 280px; left: 12px; width: 105px; height: 42px; border-radius: 6px; background: rgba(255, 130, 50, .9); color: #fff; font-size: 38px; line-height: 42px; text-align: center; }
.buy { position: absolute; top: 408px; left: 22.300%; width: 33px; height: 33px; border-radius: 7px; background: #f97c6c; color: #fff; font-size: 32px; font-weight: 600; line-height: 34px; text-align: center; }
.scale { position: absolute; left: 25%; font-size: 30px; line-height: 36px; color: #999; }
.scale.top { top: 5px; }
.scale.bottom { bottom: 0; }
.expand { position: absolute; top: 12px; right: 14px; display: flex; align-items: center; justify-content: center; width: 69px; height: 69px; border-radius: 50%; background: #fef0e8; }
.indicator { display: flex; align-items: center; height: 63px; padding: 0 0 2px 24.600%; }
.pick { position: relative; flex: none; width: 132px; height: 47px; }
.pick select { width: 100%; height: 100%; padding: 0 24px 0 0; border: 2px solid #e6e8ec; border-radius: 8px; background: #f6f7fa; appearance: none; font: inherit; font-size: 31px; line-height: 40px; text-align: center; text-align-last: center; color: #222; }
.pick svg { position: absolute; top: 17px; right: 9px; fill: #666; pointer-events: none; }
.values { flex: 1; display: grid; grid-template-columns: repeat(3, minmax(0, 1fr)); margin-left: 5px; font-size: 25px; white-space: nowrap; color: #333; }
.values.vol { display: flex; justify-content: space-between; padding-right: 12px; font-size: 24px; }
.axis { display: flex; align-items: center; height: 63px; padding: 4px 2px 0 12px; font-size: 38px; color: #999; }
.axis span { width: 166px; }
.axis span:last-child { flex: 1; text-align: right; }

.book { display: flex; flex-direction: column; padding-top: 7px; border-left: 2px solid #d8d8d8; }
.book-tabs { display: grid; grid-template-columns: repeat(3, 1fr); height: 60px; padding: 0 6px 0 5px; font-size: 32px; color: #666; }
.book-tabs button { padding-top: 3px; }
.book-tabs .active { border-radius: 8px; background: #feede5; color: #ee5a10; font-weight: 700; }
.book-link { height: 59px; font-size: 34px; line-height: 66px; text-align: center; color: #e0601a; }
.asks { display: flex; flex-direction: column; justify-content: flex-end; height: 465px; overflow: hidden; }
.bids { height: 494px; overflow: hidden; border-bottom: 2px solid #e4e4e4; }
table { width: 100%; border-collapse: collapse; table-layout: fixed; }
th, td { height: 48px; padding: 0; font-weight: 400; text-align: right; white-space: nowrap; }
th { padding-left: 6px; text-align: left; color: #666; }
.levels { flex: none; font-size: 37px; }
.levels tr { height: 48px; line-height: 44px; }
.levels th, .levels td { padding-top: 3px; }
.levels th { width: 25%; font-size: 35px; }
.levels td { color: #d2302e; }
.levels td:nth-child(2) { width: 31%; }
.levels .qty { position: relative; color: #222; }
.qty i { position: absolute; top: 6px; right: 0; height: 36px; background: #c0e5c0; }
.purchase .qty i { background: #fbc8c8; }
.qty span { position: relative; margin-right: 1px; }
.levels .state { width: 33px; padding-top: 0; }
.state i { display: block; width: 13px; height: 13px; margin-left: 7px; border-radius: 50%; }
.gray { background: #8e8e93; }
.blue { background: #3072bd; }
.orange { background: #e55a08; }
.ratio { height: 6px; margin: 11px 6px 12px 5px; background: linear-gradient(130deg, #dd4b48 38%, #5fb548 38%); }
.trades button { display: flex; align-items: center; justify-content: center; gap: 9px; width: 100%; height: 56px; padding: 4px 0 0 28px; color: #666; }
.trades th { width: 110px; }
.trades td:last-child { width: 91px; padding-right: 7px; }
.trades th, .trades td { height: 51px; padding-top: 2px; }
.trades .arrow { width: 20px; }
.arrow svg { margin-left: auto; }

.queues { display: grid; grid-template-columns: 1fr 1fr; border-bottom: 2px solid #d8d8d8; }
.queues > div { border-left: 2px solid #e4e4e4; }
.queues > div:nth-child(odd) { border-left: 0; }
.best { display: grid; grid-template-columns: 1fr 1fr 1fr; align-items: center; height: 60px; padding: 4px 8px 0 12px; border-bottom: 2px solid #e4e4e4; }
.best span:nth-child(2) { text-align: center; }
.best span:nth-child(3) { text-align: right; }
.orders { display: grid; grid-template-columns: repeat(4, 1fr); align-items: center; height: 68px; padding: 0 6px 6px 4px; text-align: right; }

.tabbar { display: grid; grid-template-columns: 275fr repeat(4, 201fr); height: 176px; background: #f6f8fa; color: #666; }
.tabbar button { display: flex; flex-direction: column; align-items: center; justify-content: flex-start; gap: 13px; padding-top: 9px; font-size: 35px; }
.tabbar .index { gap: 2px; }
.points { margin-top: 8px; font-size: 39px; line-height: 46px; }
.pair { display: flex; align-items: center; gap: 42px; padding-left: 40px; font-size: 34px; line-height: 46px; }
.pair .green { font-size: 40px; }
.tabbar .add { color: #d95a12; }
</style>
